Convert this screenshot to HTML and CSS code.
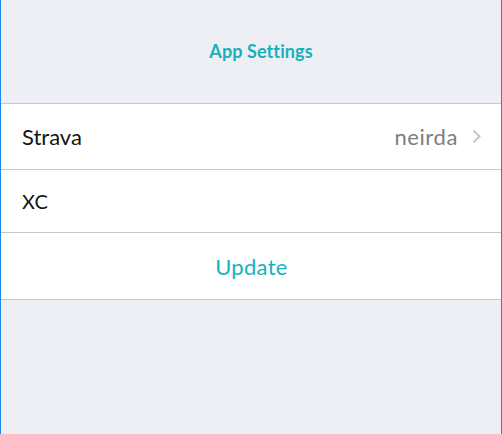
FILE: index.html
```html
<!DOCTYPE html>
<html>
<head>
<meta charset="utf-8">
<link rel="stylesheet" href="styles.css">
</head>
<body>
<div class="screen">
  <header class="nav">
    <h1 class="nav-title">App Settings</h1>
  </header>
  <ul class="list">
    <li class="row row-strava">
      <span class="label">Strava</span>
      <span class="detail">neirda</span>
      <svg class="chevron" width="9" height="15" viewBox="0 0 9 15"><path d="M1.5 1.5 L7.5 7.5 L1.5 13.5" fill="none" stroke="#c7c7cc" stroke-width="2"/></svg>
    </li>
    <li class="row row-xc">
      <span class="label">XC</span>
    </li>
    <li class="row row-update">
      <span class="action">Update</span>
    </li>
  </ul>
</div>
</body>
</html>
```

FILE: styles.css
```css
html, body {
  margin: 0;
  padding: 0;
}
body {
  font-family: Lato, "Open Sans", sans-serif;
  background: #eeeff4;
}
.screen {
  box-sizing: border-box;
  width: 502px;
  height: 434px;
  border-left: 1px solid #1e88e5;
  border-right: 1px solid #1e88e5;
  background: #eeeff4;
}
.nav {
  height: 103px;
  display: flex;
  align-items: center;
  justify-content: center;
  padding-left: 20px;
}
.nav-title {
  margin: 0;
  font-size: 18px;
  font-weight: 700;
  color: #16b2bb;
  padding-bottom: 2px;
  letter-spacing: 0.1px;
}
.list {
  list-style: none;
  margin: 0;
  padding: 0;
  background: #fff;
  border-top: 1px solid #c8c7cc;
}
.row {
  display: flex;
  align-items: center;
  border-bottom: 1px solid #c8c7cc;
  padding: 0 20px 0 21px;
  font-size: 22px;
}
.row-strava { height: 65px; }
.row-xc { height: 62px; font-size: 20px; }
.row-update { height: 66px; justify-content: center; }
.label {
  color: #151515;
  flex: 1;
}
.detail {
  color: #7d7d82;
  margin-right: 14px;
  letter-spacing: 0.6px;
}
.chevron {
  display: block;
}
.action {
  color: #16b2bb;
  letter-spacing: 0.3px;
}
```
